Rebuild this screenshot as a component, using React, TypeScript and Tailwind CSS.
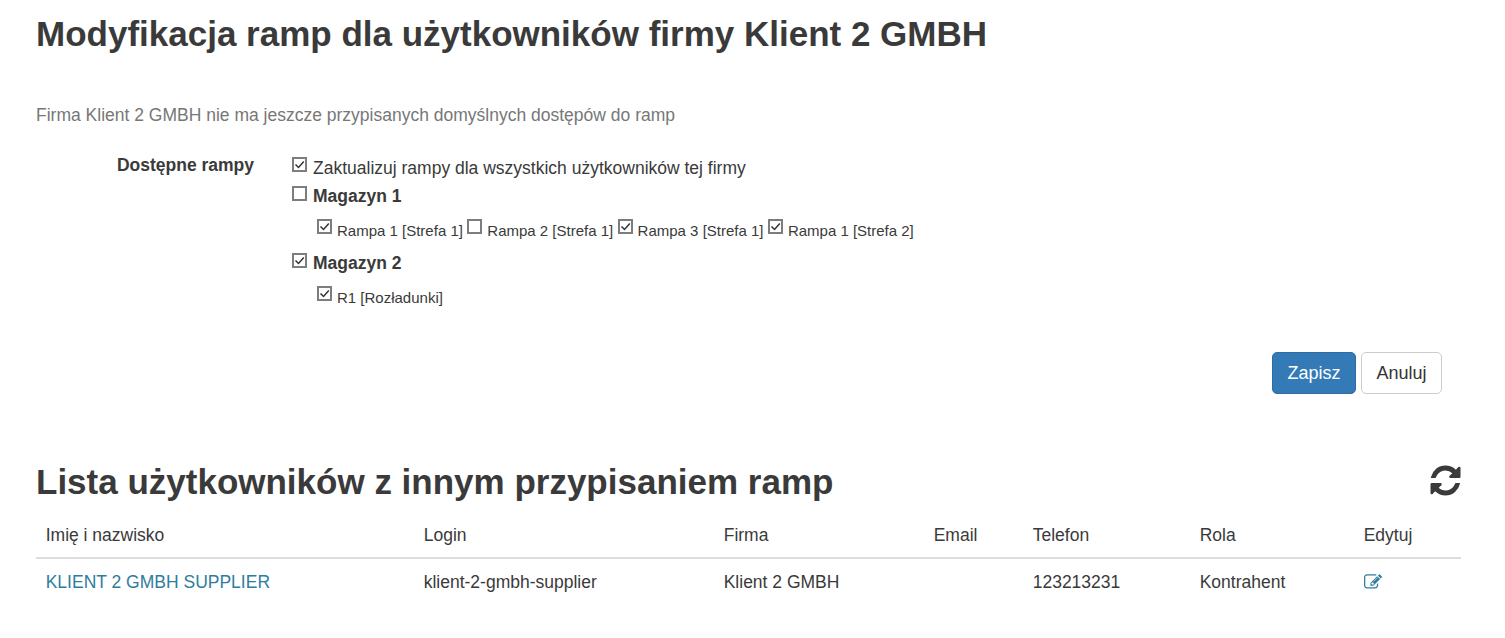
import React from "react";

function Box({ checked = true, className = "" }: { checked?: boolean; className?: string }) {
  return (
    <span className={"inline-flex items-center justify-center w-[15px] h-[15px] border-[2px] border-[#7d7d7d] bg-white shrink-0 " + className}>
      {checked && (
        <svg viewBox="0 0 11 11" className="w-[11px] h-[11px]" fill="none" stroke="#333" strokeWidth="1.5">
          <path d="M1.5 5.5 L4.5 8.5 L9.8 2.5" />
        </svg>
      )}
    </span>
  );
}

function Ramp({ label, checked = true }: { label: string; checked?: boolean }) {
  return (
    <span className="inline-flex items-start mr-[4.4px]">
      <Box checked={checked} />
      <span className="ml-[5px] text-[15px] leading-[20px] mt-[2px]">{label}</span>
    </span>
  );
}

export default function App() {
  return (
    <div className="pl-[36px] pr-[44px] text-[#3a3a3a] text-[17.5px]" style={{ fontFamily: '"Liberation Sans", Arial, sans-serif' }}>
      <h1 className="text-[35px] leading-[40px] font-bold text-[#3a3a3a] pt-[14px] tracking-normal">
        Modyfikacja ramp dla użytkowników firmy Klient 2 GMBH
      </h1>
      <p className="mt-[50px] text-[#777] leading-[22px]">Firma Klient 2 GMBH nie ma jeszcze przypisanych domyślnych dostępów do ramp</p>

      <div className="flex mt-[30px]">
        <label className="w-[218px] text-right font-bold leading-[22px] shrink-0 mt-[-2px]">Dostępne rampy</label>
        <div className="ml-[38px] flex flex-col">
          <div className="flex items-start h-[30px]">
            <Box className="mt-[1px]" />
            <span className="ml-[6px] leading-[22px] mt-[1px]">Zaktualizuj rampy dla wszystkich użytkowników tej firmy</span>
          </div>
          <div className="flex items-start h-[33px]">
            <Box checked={false} />
            <span className="ml-[6px] font-bold leading-[22px] mt-[-1px]">Magazyn 1</span>
          </div>
          <div className="flex pl-[25px] h-[34px]">
            <Ramp label="Rampa 1 [Strefa 1]" />
            <Ramp label="Rampa 2 [Strefa 1]" checked={false} />
            <Ramp label="Rampa 3 [Strefa 1]" />
            <Ramp label="Rampa 1 [Strefa 2]" />
          </div>
          <div className="flex items-start h-[33px]">
            <Box />
            <span className="ml-[6px] font-bold leading-[22px] mt-[-1px]">Magazyn 2</span>
          </div>
          <div className="flex pl-[25px]">
            <Ramp label="R1 [Rozładunki]" />
          </div>
        </div>
      </div>

      <div className="flex justify-end gap-[5px] mt-[44px] pr-[19px]">
        <button className="h-[42px] w-[84px] rounded-[5px] bg-[#337ab7] border border-[#2e6da4] text-white text-[18px]">Zapisz</button>
        <button className="h-[42px] w-[81px] rounded-[5px] bg-white border border-[#ccc] text-[#333] text-[18px]">Anuluj</button>
      </div>

      <div className="flex items-center justify-between mt-[68px]">
        <h2 className="text-[35px] leading-[40px] font-bold text-[#3a3a3a]">Lista użytkowników z innym przypisaniem ramp</h2>
        <svg viewBox="0 0 1792 1792" className="w-[35px] h-[35px] mr-[-2px] mb-[3px]" fill="#3a3a3a">
          <path d="M1639 1056q0 5-1 7-64 268-268 434.5t-478 166.5q-146 0-282.5-55t-243.5-157l-129 129q-19 19-45 19t-45-19-19-45v-448q0-26 19-45t45-19h448q26 0 45 19t19 45-19 45l-137 137q71 66 161 102t187 36q134 0 250-65t186-179q11-17 53-117 8-23 30-23h192q13 0 22.5 9.5t9.5 22.5zm25-800v448q0 26-19 45t-45 19h-448q-26 0-45-19t-19-45 19-45l138-138q-148-137-349-137-134 0-250 65t-186 179q-11 17-53 117-8 23-30 23h-199q-13 0-22.5-9.5t-9.5-22.5v-7q65-268 270-434.5t480-166.5q146 0 284 55.5t245 156.5l130-129q19-19 45-19t45 19 19 45z" />
        </svg>
      </div>

      <table className="w-[1425px] mt-[11px] table-fixed border-collapse">
        <colgroup>
          <col className="w-[378px]" />
          <col className="w-[300px]" />
          <col className="w-[210px]" />
          <col className="w-[99px]" />
          <col className="w-[167px]" />
          <col className="w-[164px]" />
          <col className="w-[107px]" />
        </colgroup>
        <thead>
          <tr className="border-b-2 border-[#ddd]">
            {["Imię i nazwisko", "Login", "Firma", "Email", "Telefon", "Rola", "Edytuj"].map((h) => (
              <th key={h} className="font-normal text-left pl-[9.7px] h-[45px] align-middle">{h}</th>
            ))}
          </tr>
        </thead>
        <tbody>
          <tr>
            <td className="pl-[9.7px] h-[47px] text-[#2e7d9e]">KLIENT 2 GMBH SUPPLIER</td>
            <td className="pl-[9.7px]">klient-2-gmbh-supplier</td>
            <td className="pl-[9.7px]">Klient 2 GMBH</td>
            <td className="pl-[9.7px]"></td>
            <td className="pl-[9.7px]">123213231</td>
            <td className="pl-[9.7px]">Kontrahent</td>
            <td className="pl-[9.7px]">
              <svg viewBox="0 0 1792 1792" className="w-[18px] h-[18px]" fill="#2e7d9e">
                <path d="M888 1184l116-116-152-152-116 116v56h96v96h56zm440-720q-16-16-33 1l-350 350q-17 17-1 33t33-1l350-350q17-17 1-33zm80 594v190q0 119-84.5 203.5t-203.5 84.5h-832q-119 0-203.5-84.5t-84.5-203.5v-832q0-119 84.5-203.5t203.5-84.5h832q63 0 117 25 15 7 18 23 3 17-9 29l-49 49q-14 14-32 8-23-6-45-6h-832q-66 0-113 47t-47 113v832q0 66 47 113t113 47h832q66 0 113-47t47-113v-126q0-13 9-22l64-64q15-15 35-9t20 29zm-96-738l288 288-672 672h-288v-288zm444 132l-92 92-288-288 92-92q28-28 68-28t68 28l152 152q28 28 28 68t-28 68z" />
              </svg>
            </td>
          </tr>
        </tbody>
      </table>
    </div>
  );
}
